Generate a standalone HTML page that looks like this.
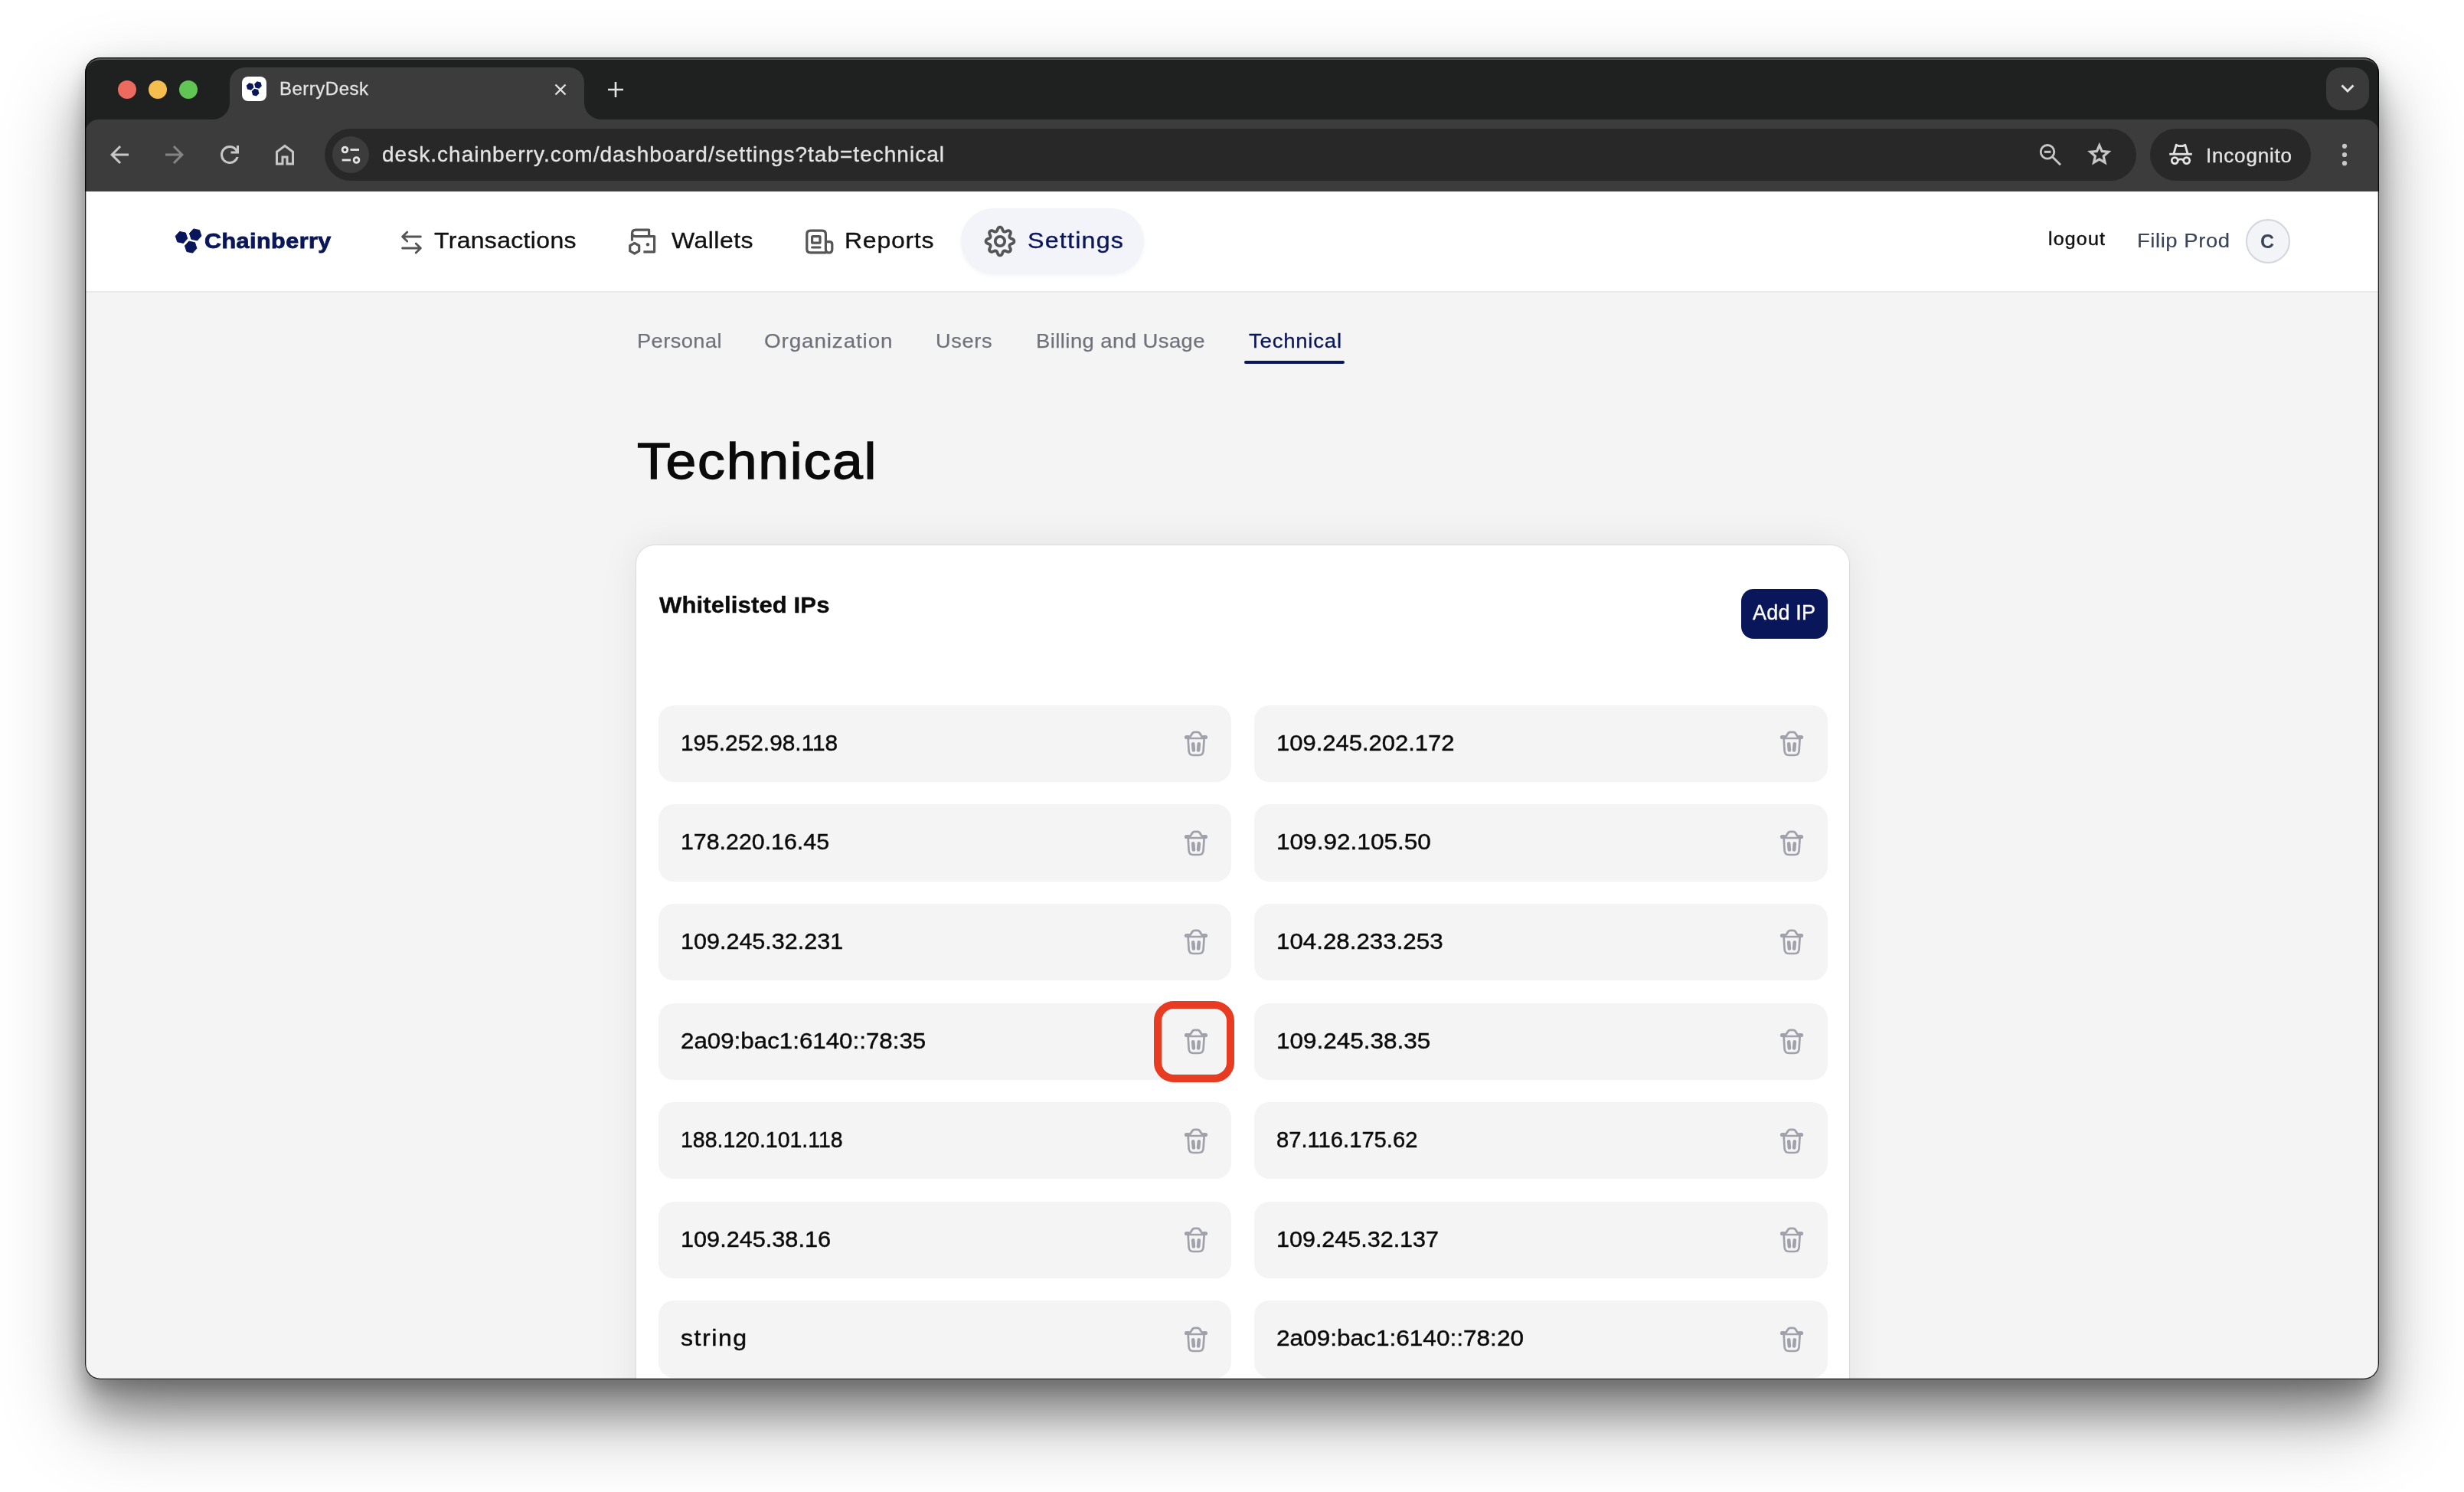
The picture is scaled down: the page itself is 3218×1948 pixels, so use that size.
<!DOCTYPE html>
<html lang="en"><head><meta charset="utf-8"><title>BerryDesk</title>
<style>
html,body{margin:0;padding:0;background:#fff;}
body{width:3218px;height:1948px;position:relative;overflow:hidden;font-family:"Liberation Sans",sans-serif;}
.t{position:absolute;white-space:nowrap;line-height:1;}
.i{position:absolute;overflow:visible;}
.abs{position:absolute;}
#shadow{position:absolute;left:111px;top:75px;width:2996px;height:1726px;border-radius:20px;
  box-shadow:0 50px 110px rgba(0,0,0,.33), 0 45px 50px rgba(0,0,0,.28), 0 0 30px rgba(0,0,0,.06), 0 14px 20px rgba(0,0,0,.15);}
#win{position:absolute;left:111px;top:75px;width:2996px;height:1726px;border-radius:20px;overflow:hidden;background:#f4f4f4;}
#in{position:absolute;left:-111px;top:-75px;width:3218px;height:1948px;will-change:transform;}
#tabstrip{left:111px;top:75px;width:2996px;height:110px;background:#1f2020;}
#toolbar{left:111px;top:156px;width:2996px;height:94px;background:#3c3c3c;border-radius:18px 18px 0 0;}
#tab{left:300px;top:88px;width:463px;height:70px;background:#3c3c3c;border-radius:20px 20px 0 0;}
.tabcurve{width:22px;height:22px;top:134px;}
#urlbar{left:424px;top:168px;width:2366px;height:68px;border-radius:34px;background:#282828;}
#siteinfo{left:434px;top:178px;width:48px;height:48px;border-radius:24px;background:#3c3c3c;}
#incog{left:2808px;top:168px;width:210px;height:68px;border-radius:34px;background:#282828;}
#tabdd{left:3038px;top:88px;width:56px;height:56px;border-radius:20px;background:#3a3a3a;}
#header{left:111px;top:250px;width:2996px;height:130px;background:#fff;border-bottom:2px solid #e9e9e9;box-sizing:content-box;}
#pill{left:1255px;top:272px;width:239px;height:86px;border-radius:43px;background:#f3f4f9;box-shadow:0 2px 5px rgba(20,30,80,.05);}
#avatar{left:2933px;top:286px;width:54px;height:54px;border-radius:50%;background:#f3f4f7;border:2.5px solid #d4d6df;}
#card{left:831px;top:711.5px;width:1584px;height:1200px;border-radius:24px;background:#fff;box-shadow:0 0 50px rgba(0,0,0,.08),0 0 0 1px rgba(0,0,0,.045),0 0 3px rgba(0,0,0,.10);}
.row{position:absolute;width:748.2px;height:100.4px;border-radius:20px;background:#f4f4f4;}
#addip{left:2274px;top:769px;width:113px;height:65px;border-radius:16px;background:#0a165a;}
#redbox{left:1507px;top:1307.3px;width:85px;height:86px;border:10px solid #e83c22;border-radius:26px;}
#winborder{position:absolute;left:111px;top:75px;width:2996px;height:1726px;border-radius:20px;box-shadow:inset 0 0 0 1.3px rgba(0,0,0,.88), inset 0 3px 0 rgba(255,255,255,.27);pointer-events:none;}
</style></head><body>
<div id="shadow"></div>
<div id="win"><div id="in">
<div class="abs" id="tabstrip"></div><div class="abs" id="toolbar"></div><div class="abs" id="tab"></div><svg class="i" style="left:278.0px;top:134.0px" width="22" height="22" viewBox="0 0 22 22" ><path d="M0 22 A22 22 0 0 0 22 0 V22Z" fill="#3c3c3c"/></svg><svg class="i" style="left:763.0px;top:134.0px" width="22" height="22" viewBox="0 0 22 22" ><path d="M22 22 A22 22 0 0 1 0 0 V22Z" fill="#3c3c3c"/></svg><div class="abs" style="left:154px;top:105px;width:24px;height:24px;border-radius:50%;background:#ed6a5e"></div><div class="abs" style="left:194px;top:105px;width:24px;height:24px;border-radius:50%;background:#f5bf4f"></div><div class="abs" style="left:234px;top:105px;width:24px;height:24px;border-radius:50%;background:#61c554"></div><div class="abs" style="left:316px;top:100px;width:32px;height:32px;border-radius:8px;background:#fff"></div><svg class="i" style="left:316.0px;top:100.0px" width="32" height="32" viewBox="0 0 32 32" ><polygon points="15.43,14.29 11.89,17.83 7.06,16.54 5.77,11.71 9.31,8.17 14.14,9.46" fill="#0a165a"/><polygon points="25.83,12.29 22.29,15.83 17.46,14.54 16.17,9.71 19.71,6.17 24.54,7.46" fill="#0a165a"/><polygon points="22.43,21.89 18.89,25.43 14.06,24.14 12.77,19.31 16.31,15.77 21.14,17.06" fill="#0a165a"/></svg><span class="t" style="left:365.0px;top:103.5px;font-size:24px;letter-spacing:0.5px;color:#e3e3e3;font-weight:400;-webkit-text-stroke:.3px #e3e3e3;">BerryDesk</span><svg class="i" style="left:723.5px;top:108.5px" width="16" height="16" viewBox="0 0 16 16" ><path d="M1.5 1.5 L14.5 14.5 M14.5 1.5 L1.5 14.5" stroke="#e3e3e3" stroke-width="2.4" fill="none"/></svg><svg class="i" style="left:793.5px;top:106.5px" width="20" height="20" viewBox="0 0 20 20" ><path d="M10 0 V20 M0 10 H20" stroke="#e3e3e3" stroke-width="2.6" fill="none"/></svg><div class="abs" id="tabdd"></div><svg class="i" style="left:3056.0px;top:109.0px" width="20" height="14" viewBox="0 0 20 14" ><path d="M2.5 2.5 L10 10 L17.5 2.5" stroke="#e3e3e3" stroke-width="3" fill="none"/></svg><svg class="i" style="left:138.0px;top:184.0px" width="36" height="36" viewBox="0 0 24 24" ><path d="m7.825 13 5.6 5.6L12 20l-8-8 8-8 1.425 1.4-5.6 5.6H20v2H7.825Z" fill="#c7c7c7"/></svg><svg class="i" style="left:210.0px;top:184.0px" width="36" height="36" viewBox="0 0 24 24" ><path d="M16.175 13H4v-2h12.175l-5.6-5.6L12 4l8 8-8 8-1.425-1.4 5.6-5.6Z" fill="#858585"/></svg><svg class="i" style="left:282.0px;top:184.0px" width="36" height="36" viewBox="0 0 24 24" ><path d="M12 20q-3.35 0-5.675-2.325T4 12q0-3.350 2.325-5.675T12 4q1.725 0 3.3.712T18 6.75V4h2v7h-7V9h4.2q-.8-1.4-2.187-2.2T12 6Q9.5 6 7.75 7.75T6 12q0 2.5 1.75 4.25T12 18q1.925 0 3.475-1.1T17.65 14h2.1q-.7 2.65-2.85 4.325T12 20Z" fill="#c7c7c7"/></svg><svg class="i" style="left:354.0px;top:184.0px" width="36" height="36" viewBox="0 0 24 24" ><path d="M6 19h3v-6h6v6h3v-9l-6-4.5L6 10v9Zm-2 2V9l8-6 8 6v12h-7v-6h-2v6H4Z" fill="#c7c7c7"/></svg><div class="abs" id="urlbar"></div><div class="abs" id="siteinfo"></div><svg class="i" style="left:440.0px;top:184.0px" width="36" height="36" viewBox="0 0 36 36" ><g stroke="#e3e3e3" stroke-width="2.8" fill="none"><circle cx="10.5" cy="11.5" r="3.4"/><path d="M17.5 11.5 H29"/><circle cx="25.5" cy="25" r="3.4"/><path d="M6.7 25 H18"/></g></svg><span class="t" style="left:499.0px;top:187.7px;font-size:28px;letter-spacing:1.02px;color:#e3e3e3;font-weight:400;-webkit-text-stroke:.35px #e3e3e3;">desk.chainberry.com/dashboard/settings?tab=technical</span><svg class="i" style="left:2660.0px;top:184.0px" width="36" height="36" viewBox="0 0 36 36" ><g stroke="#c7c7c7" stroke-width="2.8" fill="none"><circle cx="14" cy="14.3" r="8.8"/><path d="M20.5 20.8 L31 31.3"/><path d="M9.8 14.3 H18.4" stroke-width="3"/></g></svg><svg class="i" style="left:2722.9px;top:181.4px" width="37.6" height="37.6" viewBox="0 0 24 24" ><path d="m8.850 17.825 3.150-1.900 3.150 1.925-.825-3.600 2.775-2.400-3.650-.325-1.450-3.400-1.450 3.375-3.650.325 2.775 2.425-.825 3.575ZM5.825 22l1.625-7.025L2 10.250l7.200-.625L12 3l2.800 6.625 7.200.625-5.450 4.725L18.175 22 12 18.275 5.825 22Z" fill="#c7c7c7"/></svg><div class="abs" id="incog"></div><svg class="i" style="left:2830.0px;top:184.0px" width="36" height="36" viewBox="0 0 36 36" ><g stroke="#e3e3e3" stroke-width="2.8" fill="none" stroke-linejoin="round"><path d="M9 16.5 L12.2 5.2 L15 6.6 H21 L23.8 5.2 L27 16.5"/><path d="M3.2 17.2 H32.8"/><circle cx="10.3" cy="25.6" r="4"/><circle cx="25.7" cy="25.6" r="4"/><path d="M14.3 25 Q18 22.6 21.7 25"/></g></svg><span class="t" style="left:2881.0px;top:190.2px;font-size:26px;letter-spacing:0.81px;color:#e3e3e3;font-weight:400;-webkit-text-stroke:.35px #e3e3e3;">Incognito</span><svg class="i" style="left:3053.0px;top:184.0px" width="18" height="36" viewBox="0 0 18 36" ><g fill="#c7c7c7"><circle cx="9" cy="6.8" r="3.1"/><circle cx="9" cy="18" r="3.1"/><circle cx="9" cy="29.2" r="3.1"/></g></svg><div class="abs" id="header"></div><svg class="i" style="left:225.0px;top:292.0px" width="44" height="44" viewBox="0 0 44 44" ><polygon points="19.73,19.54 14.44,25.41 6.71,23.77 4.27,16.26 9.56,10.39 17.29,12.03" fill="#0a165a" stroke="#0a165a" stroke-width="1" stroke-linejoin="round"/><polygon points="37.93,16.04 32.64,21.91 24.91,20.27 22.47,12.76 27.76,6.89 35.49,8.53" fill="#0a165a" stroke="#0a165a" stroke-width="1" stroke-linejoin="round"/><polygon points="31.93,32.24 26.64,38.11 18.91,36.47 16.47,28.96 21.76,23.09 29.49,24.73" fill="#0a165a" stroke="#0a165a" stroke-width="1" stroke-linejoin="round"/></svg><span class="t" style="left:267.3px;top:300.6px;font-size:28px;letter-spacing:0.43px;transform:scaleX(1.0900);transform-origin:0 0;color:#0a165a;font-weight:700;-webkit-text-stroke:.8px #0a165a;">Chainberry</span><svg class="i" style="left:520.0px;top:296.0px" width="40" height="40" viewBox="0 0 40 40" ><g stroke="#555" stroke-width="2.8" fill="none" stroke-linecap="round" stroke-linejoin="round"><path d="M29.4 13 H5.6 M11.8 6.9 L5.6 13 L11.8 19.1"/><path d="M5.6 28 H29.4 M23.2 21.9 L29.4 28 L23.2 34.1"/></g></svg><span class="t" style="left:567.0px;top:298.5px;font-size:30px;letter-spacing:0.32px;transform:scaleX(1.0650);transform-origin:0 0;color:#111;font-weight:400;-webkit-text-stroke:.35px #111;">Transactions</span><svg class="i" style="left:816.0px;top:294.0px" width="44" height="44" viewBox="0 0 44 44" ><g stroke="#555" stroke-width="3.2" fill="none" stroke-linejoin="round"><path d="M9.5 20.5 V11 Q9.5 6.2 14.5 6.2 H31.6 V14.6"/><path d="M9.5 11 Q10 14.6 14 14.6 H38.6 V34.8 H24.4"/><polygon points="18.68,33.65 12.70,37.10 6.72,33.65 6.72,26.75 12.70,23.30 18.68,26.75"/></g><circle cx="30" cy="25.2" r="2.2" fill="#555"/></svg><span class="t" style="left:877.4px;top:298.5px;font-size:30px;letter-spacing:0.46px;transform:scaleX(1.0650);transform-origin:0 0;color:#111;font-weight:400;-webkit-text-stroke:.35px #111;">Wallets</span><svg class="i" style="left:1048.0px;top:294.0px" width="44" height="44" viewBox="0 0 44 44" ><g stroke="#555" stroke-width="3.2" fill="none" stroke-linejoin="round" stroke-linecap="round"><path d="M30.4 35.8 H10.4 Q5.8 35.8 5.8 31.2 V11.8 Q5.8 7.2 10.4 7.2 H25.8 Q30.4 7.2 30.4 11.8 V31.4 Q30.4 35.8 34.6 35.8 Q38.8 35.8 38.8 31.4 V25 Q38.8 21.6 35.4 21.6 H30.4"/><rect x="12.6" y="14.6" width="10.4" height="8.6" rx="1"/><path d="M12.6 29 H23"/></g></svg><span class="t" style="left:1102.5px;top:298.5px;font-size:30px;letter-spacing:0.72px;transform:scaleX(1.0650);transform-origin:0 0;color:#111;font-weight:400;-webkit-text-stroke:.35px #111;">Reports</span><div class="abs" id="pill"></div><svg class="i" style="left:1283.5px;top:292.5px" width="44" height="44" viewBox="0 0 44 44" ><path d="M22.00 3.60 L22.60 3.65 L23.19 3.82 L23.76 4.13 L24.28 4.65 L24.74 5.39 L25.12 6.31 L25.44 7.23 L25.75 7.99 L26.08 8.56 L26.43 8.95 L26.81 9.23 L27.20 9.44 L27.63 9.57 L28.09 9.64 L28.62 9.61 L29.25 9.44 L30.01 9.12 L30.89 8.70 L31.80 8.32 L32.65 8.12 L33.39 8.12 L34.01 8.30 L34.55 8.60 L35.01 8.99 L35.40 9.45 L35.70 9.99 L35.88 10.61 L35.88 11.35 L35.68 12.20 L35.30 13.11 L34.88 13.99 L34.56 14.75 L34.39 15.38 L34.36 15.91 L34.43 16.37 L34.56 16.80 L34.77 17.19 L35.05 17.57 L35.44 17.92 L36.01 18.25 L36.77 18.56 L37.69 18.88 L38.61 19.26 L39.35 19.72 L39.87 20.24 L40.18 20.81 L40.35 21.40 L40.40 22.00 L40.35 22.60 L40.18 23.19 L39.87 23.76 L39.35 24.28 L38.61 24.74 L37.69 25.12 L36.77 25.44 L36.01 25.75 L35.44 26.08 L35.05 26.43 L34.77 26.81 L34.56 27.20 L34.43 27.63 L34.36 28.09 L34.39 28.62 L34.56 29.25 L34.88 30.01 L35.30 30.89 L35.68 31.80 L35.88 32.65 L35.88 33.39 L35.70 34.01 L35.40 34.55 L35.01 35.01 L34.55 35.40 L34.01 35.70 L33.39 35.88 L32.65 35.88 L31.80 35.68 L30.89 35.30 L30.01 34.88 L29.25 34.56 L28.62 34.39 L28.09 34.36 L27.63 34.43 L27.20 34.56 L26.81 34.77 L26.43 35.05 L26.08 35.44 L25.75 36.01 L25.44 36.77 L25.12 37.69 L24.74 38.61 L24.28 39.35 L23.76 39.87 L23.19 40.18 L22.60 40.35 L22.00 40.40 L21.40 40.35 L20.81 40.18 L20.24 39.87 L19.72 39.35 L19.26 38.61 L18.88 37.69 L18.56 36.77 L18.25 36.01 L17.92 35.44 L17.57 35.05 L17.19 34.77 L16.80 34.56 L16.37 34.43 L15.91 34.36 L15.38 34.39 L14.75 34.56 L13.99 34.88 L13.11 35.30 L12.20 35.68 L11.35 35.88 L10.61 35.88 L9.99 35.70 L9.45 35.40 L8.99 35.01 L8.60 34.55 L8.30 34.01 L8.12 33.39 L8.12 32.65 L8.32 31.80 L8.70 30.89 L9.12 30.01 L9.44 29.25 L9.61 28.62 L9.64 28.09 L9.57 27.63 L9.44 27.20 L9.23 26.81 L8.95 26.43 L8.56 26.08 L7.99 25.75 L7.23 25.44 L6.31 25.12 L5.39 24.74 L4.65 24.28 L4.13 23.76 L3.82 23.19 L3.65 22.60 L3.60 22.00 L3.65 21.40 L3.82 20.81 L4.13 20.24 L4.65 19.72 L5.39 19.26 L6.31 18.88 L7.23 18.56 L7.99 18.25 L8.56 17.92 L8.95 17.57 L9.23 17.19 L9.44 16.80 L9.57 16.37 L9.64 15.91 L9.61 15.38 L9.44 14.75 L9.12 13.99 L8.70 13.11 L8.32 12.20 L8.12 11.35 L8.12 10.61 L8.30 9.99 L8.60 9.45 L8.99 8.99 L9.45 8.60 L9.99 8.30 L10.61 8.12 L11.35 8.12 L12.20 8.32 L13.11 8.70 L13.99 9.12 L14.75 9.44 L15.38 9.61 L15.91 9.64 L16.37 9.57 L16.80 9.44 L17.19 9.23 L17.57 8.95 L17.92 8.56 L18.25 7.99 L18.56 7.23 L18.88 6.31 L19.26 5.39 L19.72 4.65 L20.24 4.13 L20.81 3.82 L21.40 3.65Z" stroke="#555" stroke-width="3.8" fill="none" stroke-linejoin="round"/><circle cx="22" cy="22" r="6.2" stroke="#555" stroke-width="3.8" fill="none"/></svg><span class="t" style="left:1341.5px;top:298.5px;font-size:30px;letter-spacing:1.12px;transform:scaleX(1.0750);transform-origin:0 0;color:#0a165a;font-weight:400;-webkit-text-stroke:.35px #0a165a;">Settings</span><span class="t" style="left:2675.0px;top:301.0px;font-size:23px;letter-spacing:1.04px;transform:scaleX(1.0900);transform-origin:0 0;color:#111;font-weight:400;-webkit-text-stroke:.4px #111;">logout</span><span class="t" style="left:2790.5px;top:301.0px;font-size:26px;letter-spacing:0.54px;transform:scaleX(1.0550);transform-origin:0 0;color:#3b4558;font-weight:400;-webkit-text-stroke:.2px #3b4558;">Filip Prod</span><div class="abs" id="avatar"></div><span class="t" style="left:2952.0px;top:302.6px;font-size:25px;letter-spacing:0px;color:#3b4558;font-weight:700;">C</span><span class="t" style="left:831.5px;top:431.7px;font-size:26px;letter-spacing:0.45px;transform:scaleX(1.0450);transform-origin:0 0;color:#6f727a;font-weight:400;-webkit-text-stroke:.25px #6f727a;">Personal</span><span class="t" style="left:997.9px;top:431.7px;font-size:26px;letter-spacing:0.83px;transform:scaleX(1.0700);transform-origin:0 0;color:#6f727a;font-weight:400;-webkit-text-stroke:.25px #6f727a;">Organization</span><span class="t" style="left:1221.5px;top:431.7px;font-size:26px;letter-spacing:0.61px;transform:scaleX(1.0450);transform-origin:0 0;color:#6f727a;font-weight:400;-webkit-text-stroke:.25px #6f727a;">Users</span><span class="t" style="left:1352.5px;top:431.7px;font-size:26px;letter-spacing:0.42px;transform:scaleX(1.0550);transform-origin:0 0;color:#6f727a;font-weight:400;-webkit-text-stroke:.25px #6f727a;">Billing and Usage</span><span class="t" style="left:1630.8px;top:431.7px;font-size:26px;letter-spacing:0.72px;transform:scaleX(1.0600);transform-origin:0 0;color:#0a165a;font-weight:400;-webkit-text-stroke:.3px #0a165a;">Technical</span><div class="abs" style="left:1625px;top:471px;width:131px;height:4px;border-radius:2px;background:#0a165a"></div><span class="t" style="left:832.0px;top:569.3px;font-size:66px;letter-spacing:1.61px;transform:scaleX(1.0850);transform-origin:0 0;color:#0b0b0b;font-weight:400;-webkit-text-stroke:1.3px #0b0b0b;">Technical</span><div class="abs" id="card"></div><span class="t" style="left:861.0px;top:774.9px;font-size:30px;letter-spacing:0.11px;transform:scaleX(1.0350);transform-origin:0 0;color:#0b0b0b;font-weight:700;-webkit-text-stroke:.4px #0b0b0b;">Whitelisted IPs</span><div class="abs" id="addip"></div><span class="t" style="left:2289.0px;top:786.5px;font-size:27px;letter-spacing:0.19px;color:#fff;font-weight:400;-webkit-text-stroke:.35px #fff;">Add IP</span><div class="row" style="left:860.3px;top:920.7px"></div><span class="t" style="left:888.6px;top:954.7px;font-size:30px;letter-spacing:0.00px;transform:scaleX(0.9946);transform-origin:0 0;color:#0b0b0b;font-weight:400;-webkit-text-stroke:.45px #0b0b0b;">195.252.98.118</span><svg class="i" style="left:1543.7px;top:952.1px" width="36" height="38" viewBox="0 0 36 38" ><g stroke="#a0a1ab" fill="none" stroke-linecap="round" stroke-linejoin="round"><path d="M5.5 10.5 H8.2 M27.8 10.5 H30.5" stroke-width="5.2"/><path d="M9 12 H27" stroke-width="2.6"/><path d="M9.7 10.8 L13.3 5.4 Q14.3 3.9 16 3.9 H20.1 Q21.8 3.9 22.8 5.4 L26.4 10.8" stroke-width="2.8"/><path d="M7.7 13 L8.6 28.5 Q9 34 14.5 34 H21.7 Q27.2 34 27.6 28.5 L28.6 13" stroke-width="2.7"/><path d="M14.2 19.4 L14.9 27.5" stroke-width="4.6"/><path d="M21.8 19.4 L21.1 27.5" stroke-width="4.6"/></g></svg><div class="row" style="left:1638.4px;top:920.7px"></div><span class="t" style="left:1666.7px;top:954.7px;font-size:30px;letter-spacing:0.00px;transform:scaleX(1.0323);transform-origin:0 0;color:#0b0b0b;font-weight:400;-webkit-text-stroke:.45px #0b0b0b;">109.245.202.172</span><svg class="i" style="left:2321.8px;top:952.1px" width="36" height="38" viewBox="0 0 36 38" ><g stroke="#a0a1ab" fill="none" stroke-linecap="round" stroke-linejoin="round"><path d="M5.5 10.5 H8.2 M27.8 10.5 H30.5" stroke-width="5.2"/><path d="M9 12 H27" stroke-width="2.6"/><path d="M9.7 10.8 L13.3 5.4 Q14.3 3.9 16 3.9 H20.1 Q21.8 3.9 22.8 5.4 L26.4 10.8" stroke-width="2.8"/><path d="M7.7 13 L8.6 28.5 Q9 34 14.5 34 H21.7 Q27.2 34 27.6 28.5 L28.6 13" stroke-width="2.7"/><path d="M14.2 19.4 L14.9 27.5" stroke-width="4.6"/><path d="M21.8 19.4 L21.1 27.5" stroke-width="4.6"/></g></svg><div class="row" style="left:860.3px;top:1050.3px"></div><span class="t" style="left:888.6px;top:1084.3px;font-size:30px;letter-spacing:0.00px;transform:scaleX(1.0112);transform-origin:0 0;color:#0b0b0b;font-weight:400;-webkit-text-stroke:.45px #0b0b0b;">178.220.16.45</span><svg class="i" style="left:1543.7px;top:1081.7px" width="36" height="38" viewBox="0 0 36 38" ><g stroke="#a0a1ab" fill="none" stroke-linecap="round" stroke-linejoin="round"><path d="M5.5 10.5 H8.2 M27.8 10.5 H30.5" stroke-width="5.2"/><path d="M9 12 H27" stroke-width="2.6"/><path d="M9.7 10.8 L13.3 5.4 Q14.3 3.9 16 3.9 H20.1 Q21.8 3.9 22.8 5.4 L26.4 10.8" stroke-width="2.8"/><path d="M7.7 13 L8.6 28.5 Q9 34 14.5 34 H21.7 Q27.2 34 27.6 28.5 L28.6 13" stroke-width="2.7"/><path d="M14.2 19.4 L14.9 27.5" stroke-width="4.6"/><path d="M21.8 19.4 L21.1 27.5" stroke-width="4.6"/></g></svg><div class="row" style="left:1638.4px;top:1050.3px"></div><span class="t" style="left:1666.7px;top:1084.3px;font-size:30px;letter-spacing:0.00px;transform:scaleX(1.0523);transform-origin:0 0;color:#0b0b0b;font-weight:400;-webkit-text-stroke:.45px #0b0b0b;">109.92.105.50</span><svg class="i" style="left:2321.8px;top:1081.7px" width="36" height="38" viewBox="0 0 36 38" ><g stroke="#a0a1ab" fill="none" stroke-linecap="round" stroke-linejoin="round"><path d="M5.5 10.5 H8.2 M27.8 10.5 H30.5" stroke-width="5.2"/><path d="M9 12 H27" stroke-width="2.6"/><path d="M9.7 10.8 L13.3 5.4 Q14.3 3.9 16 3.9 H20.1 Q21.8 3.9 22.8 5.4 L26.4 10.8" stroke-width="2.8"/><path d="M7.7 13 L8.6 28.5 Q9 34 14.5 34 H21.7 Q27.2 34 27.6 28.5 L28.6 13" stroke-width="2.7"/><path d="M14.2 19.4 L14.9 27.5" stroke-width="4.6"/><path d="M21.8 19.4 L21.1 27.5" stroke-width="4.6"/></g></svg><div class="row" style="left:860.3px;top:1179.9px"></div><span class="t" style="left:888.6px;top:1213.9px;font-size:30px;letter-spacing:0.00px;transform:scaleX(1.0175);transform-origin:0 0;color:#0b0b0b;font-weight:400;-webkit-text-stroke:.45px #0b0b0b;">109.245.32.231</span><svg class="i" style="left:1543.7px;top:1211.3px" width="36" height="38" viewBox="0 0 36 38" ><g stroke="#a0a1ab" fill="none" stroke-linecap="round" stroke-linejoin="round"><path d="M5.5 10.5 H8.2 M27.8 10.5 H30.5" stroke-width="5.2"/><path d="M9 12 H27" stroke-width="2.6"/><path d="M9.7 10.8 L13.3 5.4 Q14.3 3.9 16 3.9 H20.1 Q21.8 3.9 22.8 5.4 L26.4 10.8" stroke-width="2.8"/><path d="M7.7 13 L8.6 28.5 Q9 34 14.5 34 H21.7 Q27.2 34 27.6 28.5 L28.6 13" stroke-width="2.7"/><path d="M14.2 19.4 L14.9 27.5" stroke-width="4.6"/><path d="M21.8 19.4 L21.1 27.5" stroke-width="4.6"/></g></svg><div class="row" style="left:1638.4px;top:1179.9px"></div><span class="t" style="left:1666.7px;top:1213.9px;font-size:30px;letter-spacing:0.00px;transform:scaleX(1.0434);transform-origin:0 0;color:#0b0b0b;font-weight:400;-webkit-text-stroke:.45px #0b0b0b;">104.28.233.253</span><svg class="i" style="left:2321.8px;top:1211.3px" width="36" height="38" viewBox="0 0 36 38" ><g stroke="#a0a1ab" fill="none" stroke-linecap="round" stroke-linejoin="round"><path d="M5.5 10.5 H8.2 M27.8 10.5 H30.5" stroke-width="5.2"/><path d="M9 12 H27" stroke-width="2.6"/><path d="M9.7 10.8 L13.3 5.4 Q14.3 3.9 16 3.9 H20.1 Q21.8 3.9 22.8 5.4 L26.4 10.8" stroke-width="2.8"/><path d="M7.7 13 L8.6 28.5 Q9 34 14.5 34 H21.7 Q27.2 34 27.6 28.5 L28.6 13" stroke-width="2.7"/><path d="M14.2 19.4 L14.9 27.5" stroke-width="4.6"/><path d="M21.8 19.4 L21.1 27.5" stroke-width="4.6"/></g></svg><div class="row" style="left:860.3px;top:1309.5px"></div><span class="t" style="left:888.6px;top:1343.5px;font-size:30px;letter-spacing:0.00px;transform:scaleX(1.0432);transform-origin:0 0;color:#0b0b0b;font-weight:400;-webkit-text-stroke:.45px #0b0b0b;">2a09:bac1:6140::78:35</span><svg class="i" style="left:1543.7px;top:1340.9px" width="36" height="38" viewBox="0 0 36 38" ><g stroke="#a0a1ab" fill="none" stroke-linecap="round" stroke-linejoin="round"><path d="M5.5 10.5 H8.2 M27.8 10.5 H30.5" stroke-width="5.2"/><path d="M9 12 H27" stroke-width="2.6"/><path d="M9.7 10.8 L13.3 5.4 Q14.3 3.9 16 3.9 H20.1 Q21.8 3.9 22.8 5.4 L26.4 10.8" stroke-width="2.8"/><path d="M7.7 13 L8.6 28.5 Q9 34 14.5 34 H21.7 Q27.2 34 27.6 28.5 L28.6 13" stroke-width="2.7"/><path d="M14.2 19.4 L14.9 27.5" stroke-width="4.6"/><path d="M21.8 19.4 L21.1 27.5" stroke-width="4.6"/></g></svg><div class="row" style="left:1638.4px;top:1309.5px"></div><span class="t" style="left:1666.7px;top:1343.5px;font-size:30px;letter-spacing:0.00px;transform:scaleX(1.0487);transform-origin:0 0;color:#0b0b0b;font-weight:400;-webkit-text-stroke:.45px #0b0b0b;">109.245.38.35</span><svg class="i" style="left:2321.8px;top:1340.9px" width="36" height="38" viewBox="0 0 36 38" ><g stroke="#a0a1ab" fill="none" stroke-linecap="round" stroke-linejoin="round"><path d="M5.5 10.5 H8.2 M27.8 10.5 H30.5" stroke-width="5.2"/><path d="M9 12 H27" stroke-width="2.6"/><path d="M9.7 10.8 L13.3 5.4 Q14.3 3.9 16 3.9 H20.1 Q21.8 3.9 22.8 5.4 L26.4 10.8" stroke-width="2.8"/><path d="M7.7 13 L8.6 28.5 Q9 34 14.5 34 H21.7 Q27.2 34 27.6 28.5 L28.6 13" stroke-width="2.7"/><path d="M14.2 19.4 L14.9 27.5" stroke-width="4.6"/><path d="M21.8 19.4 L21.1 27.5" stroke-width="4.6"/></g></svg><div class="row" style="left:860.3px;top:1439.1px"></div><span class="t" style="left:888.6px;top:1473.1px;font-size:30px;letter-spacing:0.00px;transform:scaleX(0.9489);transform-origin:0 0;color:#0b0b0b;font-weight:400;-webkit-text-stroke:.45px #0b0b0b;">188.120.101.118</span><svg class="i" style="left:1543.7px;top:1470.5px" width="36" height="38" viewBox="0 0 36 38" ><g stroke="#a0a1ab" fill="none" stroke-linecap="round" stroke-linejoin="round"><path d="M5.5 10.5 H8.2 M27.8 10.5 H30.5" stroke-width="5.2"/><path d="M9 12 H27" stroke-width="2.6"/><path d="M9.7 10.8 L13.3 5.4 Q14.3 3.9 16 3.9 H20.1 Q21.8 3.9 22.8 5.4 L26.4 10.8" stroke-width="2.8"/><path d="M7.7 13 L8.6 28.5 Q9 34 14.5 34 H21.7 Q27.2 34 27.6 28.5 L28.6 13" stroke-width="2.7"/><path d="M14.2 19.4 L14.9 27.5" stroke-width="4.6"/><path d="M21.8 19.4 L21.1 27.5" stroke-width="4.6"/></g></svg><div class="row" style="left:1638.4px;top:1439.1px"></div><span class="t" style="left:1666.7px;top:1473.1px;font-size:30px;letter-spacing:0.00px;transform:scaleX(0.9724);transform-origin:0 0;color:#0b0b0b;font-weight:400;-webkit-text-stroke:.45px #0b0b0b;">87.116.175.62</span><svg class="i" style="left:2321.8px;top:1470.5px" width="36" height="38" viewBox="0 0 36 38" ><g stroke="#a0a1ab" fill="none" stroke-linecap="round" stroke-linejoin="round"><path d="M5.5 10.5 H8.2 M27.8 10.5 H30.5" stroke-width="5.2"/><path d="M9 12 H27" stroke-width="2.6"/><path d="M9.7 10.8 L13.3 5.4 Q14.3 3.9 16 3.9 H20.1 Q21.8 3.9 22.8 5.4 L26.4 10.8" stroke-width="2.8"/><path d="M7.7 13 L8.6 28.5 Q9 34 14.5 34 H21.7 Q27.2 34 27.6 28.5 L28.6 13" stroke-width="2.7"/><path d="M14.2 19.4 L14.9 27.5" stroke-width="4.6"/><path d="M21.8 19.4 L21.1 27.5" stroke-width="4.6"/></g></svg><div class="row" style="left:860.3px;top:1568.7px"></div><span class="t" style="left:888.6px;top:1602.7px;font-size:30px;letter-spacing:0.00px;transform:scaleX(1.0216);transform-origin:0 0;color:#0b0b0b;font-weight:400;-webkit-text-stroke:.45px #0b0b0b;">109.245.38.16</span><svg class="i" style="left:1543.7px;top:1600.1px" width="36" height="38" viewBox="0 0 36 38" ><g stroke="#a0a1ab" fill="none" stroke-linecap="round" stroke-linejoin="round"><path d="M5.5 10.5 H8.2 M27.8 10.5 H30.5" stroke-width="5.2"/><path d="M9 12 H27" stroke-width="2.6"/><path d="M9.7 10.8 L13.3 5.4 Q14.3 3.9 16 3.9 H20.1 Q21.8 3.9 22.8 5.4 L26.4 10.8" stroke-width="2.8"/><path d="M7.7 13 L8.6 28.5 Q9 34 14.5 34 H21.7 Q27.2 34 27.6 28.5 L28.6 13" stroke-width="2.7"/><path d="M14.2 19.4 L14.9 27.5" stroke-width="4.6"/><path d="M21.8 19.4 L21.1 27.5" stroke-width="4.6"/></g></svg><div class="row" style="left:1638.4px;top:1568.7px"></div><span class="t" style="left:1666.7px;top:1602.7px;font-size:30px;letter-spacing:-0.00px;transform:scaleX(1.0166);transform-origin:0 0;color:#0b0b0b;font-weight:400;-webkit-text-stroke:.45px #0b0b0b;">109.245.32.137</span><svg class="i" style="left:2321.8px;top:1600.1px" width="36" height="38" viewBox="0 0 36 38" ><g stroke="#a0a1ab" fill="none" stroke-linecap="round" stroke-linejoin="round"><path d="M5.5 10.5 H8.2 M27.8 10.5 H30.5" stroke-width="5.2"/><path d="M9 12 H27" stroke-width="2.6"/><path d="M9.7 10.8 L13.3 5.4 Q14.3 3.9 16 3.9 H20.1 Q21.8 3.9 22.8 5.4 L26.4 10.8" stroke-width="2.8"/><path d="M7.7 13 L8.6 28.5 Q9 34 14.5 34 H21.7 Q27.2 34 27.6 28.5 L28.6 13" stroke-width="2.7"/><path d="M14.2 19.4 L14.9 27.5" stroke-width="4.6"/><path d="M21.8 19.4 L21.1 27.5" stroke-width="4.6"/></g></svg><div class="row" style="left:860.3px;top:1698.3px"></div><span class="t" style="left:888.6px;top:1732.3px;font-size:30px;letter-spacing:1.44px;transform:scaleX(1.0700);transform-origin:0 0;color:#0b0b0b;font-weight:400;-webkit-text-stroke:.45px #0b0b0b;">string</span><svg class="i" style="left:1543.7px;top:1729.7px" width="36" height="38" viewBox="0 0 36 38" ><g stroke="#a0a1ab" fill="none" stroke-linecap="round" stroke-linejoin="round"><path d="M5.5 10.5 H8.2 M27.8 10.5 H30.5" stroke-width="5.2"/><path d="M9 12 H27" stroke-width="2.6"/><path d="M9.7 10.8 L13.3 5.4 Q14.3 3.9 16 3.9 H20.1 Q21.8 3.9 22.8 5.4 L26.4 10.8" stroke-width="2.8"/><path d="M7.7 13 L8.6 28.5 Q9 34 14.5 34 H21.7 Q27.2 34 27.6 28.5 L28.6 13" stroke-width="2.7"/><path d="M14.2 19.4 L14.9 27.5" stroke-width="4.6"/><path d="M21.8 19.4 L21.1 27.5" stroke-width="4.6"/></g></svg><div class="row" style="left:1638.4px;top:1698.3px"></div><span class="t" style="left:1666.7px;top:1732.3px;font-size:30px;letter-spacing:0.00px;transform:scaleX(1.0523);transform-origin:0 0;color:#0b0b0b;font-weight:400;-webkit-text-stroke:.45px #0b0b0b;">2a09:bac1:6140::78:20</span><svg class="i" style="left:2321.8px;top:1729.7px" width="36" height="38" viewBox="0 0 36 38" ><g stroke="#a0a1ab" fill="none" stroke-linecap="round" stroke-linejoin="round"><path d="M5.5 10.5 H8.2 M27.8 10.5 H30.5" stroke-width="5.2"/><path d="M9 12 H27" stroke-width="2.6"/><path d="M9.7 10.8 L13.3 5.4 Q14.3 3.9 16 3.9 H20.1 Q21.8 3.9 22.8 5.4 L26.4 10.8" stroke-width="2.8"/><path d="M7.7 13 L8.6 28.5 Q9 34 14.5 34 H21.7 Q27.2 34 27.6 28.5 L28.6 13" stroke-width="2.7"/><path d="M14.2 19.4 L14.9 27.5" stroke-width="4.6"/><path d="M21.8 19.4 L21.1 27.5" stroke-width="4.6"/></g></svg><div class="abs" id="redbox"></div></div></div>
<div id="winborder"></div>
</body></html>
